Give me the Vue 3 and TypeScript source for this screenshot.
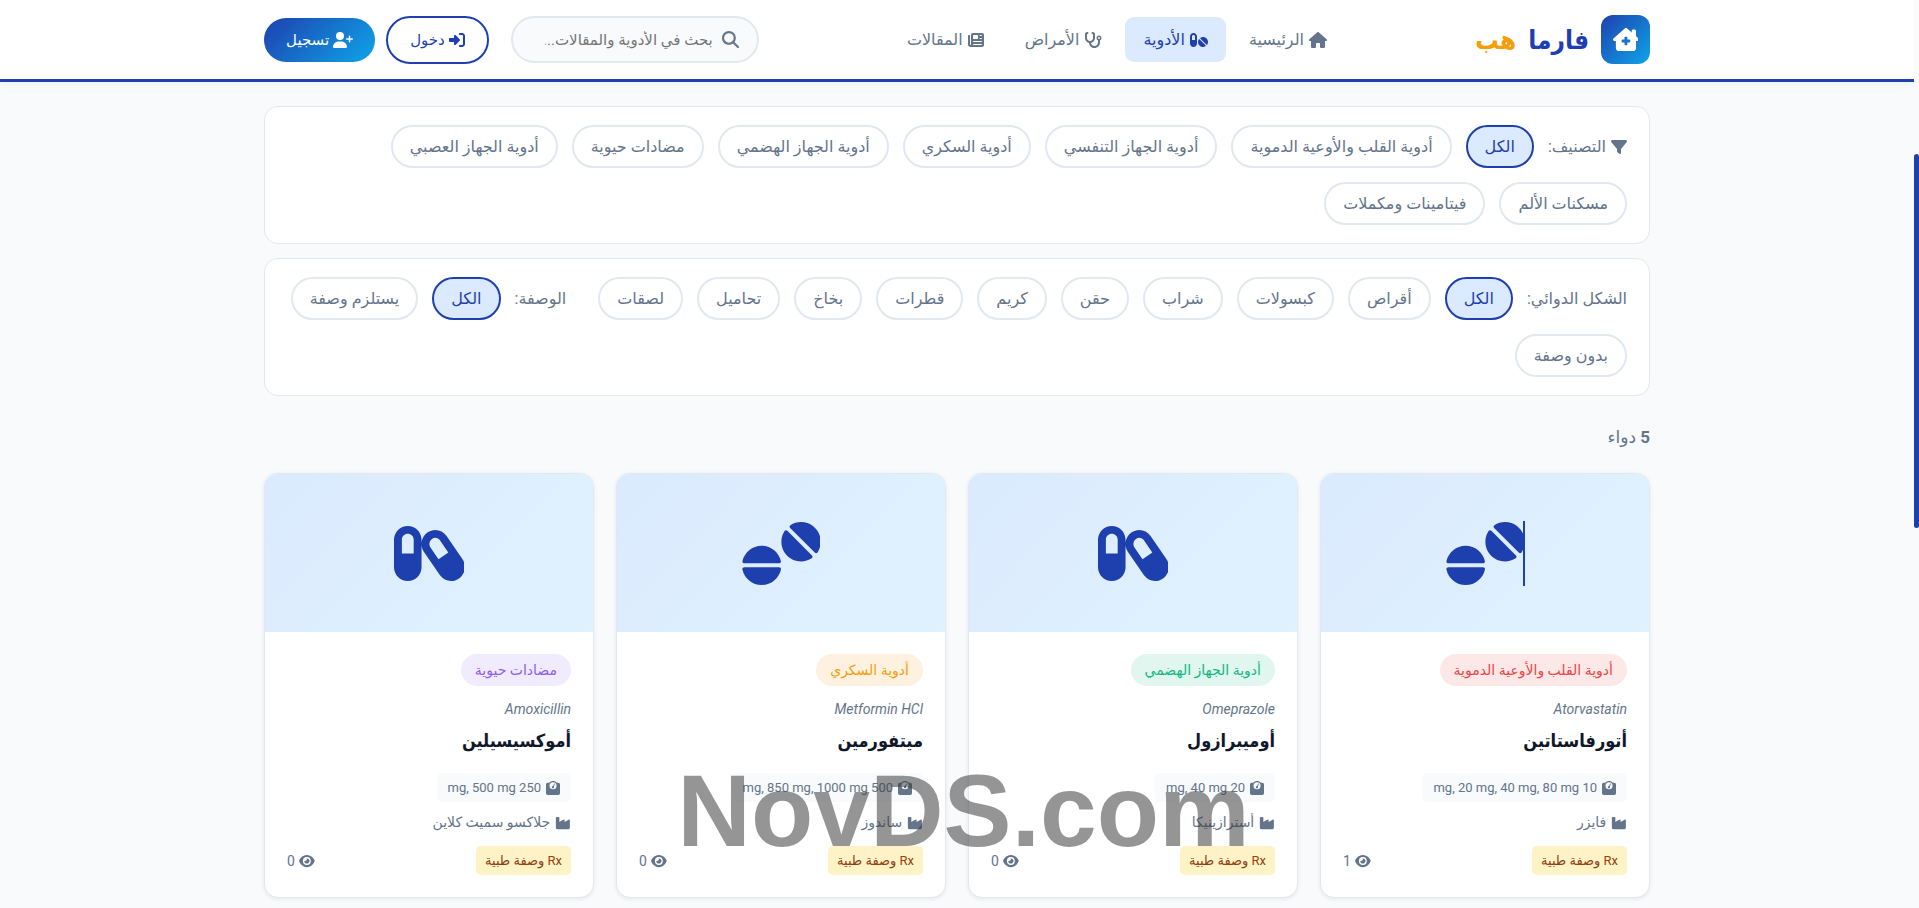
<script setup lang="ts">
import { h, ref } from 'vue'

type Glyph = { w: number; d: string }

const glyphs: Record<string, Glyph> = {
  houseMedical: { w: 576, d: 'M543.8 287.6c17 0 32-14 32-32.1c1-9-3-17-11-24L512 185l0-121c0-17.7-14.3-32-32-32l-32 0c-17.7 0-32 14.3-32 32l0 36.7L309.5 7c-6-5-14-7-21-7s-15 1-22 8L10 231.5c-7 7-10 15-10 24c0 18 14 32.1 32 32.1l32 0 0 160.4c0 35.3 28.7 64 64 64l320.4 0c35.5 0 64.2-28.8 64-64.3l-.7-160.2 32 0zM256 208c0-8.8 7.2-16 16-16l32 0c8.8 0 16 7.2 16 16l0 48 48 0c8.8 0 16 7.2 16 16l0 32c0 8.8-7.2 16-16 16l-48 0 0 48c0 8.8-7.2 16-16 16l-32 0c-8.8 0-16-7.2-16-16l0-48-48 0c-8.8 0-16-7.2-16-16l0-32c0-8.8 7.2-16 16-16l48 0 0-48z' },
  house: { w: 576, d: 'M575.8 255.5c0 18-15 32.1-32 32.1l-32 0 .7 160.2c0 2.7-.2 5.4-.5 8.1l0 16.2c0 22.1-17.9 40-40 40l-16 0c-1.1 0-2.2 0-3.3-.1c-1.4 .1-2.8 .1-4.2 .1L416 512l-24 0c-22.1 0-40-17.9-40-40l0-24 0-64c0-17.7-14.3-32-32-32l-64 0c-17.7 0-32 14.3-32 32l0 64 0 24c0 22.1-17.9 40-40 40l-24 0-31.9 0c-1.5 0-3-.1-4.5-.2c-1.2 .1-2.4 .2-3.6 .2l-16 0c-22.1 0-40-17.9-40-40l0-112c0-.9 0-1.9 .1-2.8l0-69.7-32 0c-18 0-32-14-32-32.1c0-9 3-17 10-24L266.4 8c7-7 15-8 22-8s15 2 21 7L564.8 231.5c8 7 12 15 11 24z' },
  pills: { w: 576, d: 'M112 96c-26.5 0-48 21.5-48 48l0 112 96 0 0-112c0-26.5-21.5-48-48-48zM0 144C0 82.1 50.1 32 112 32s112 50.1 112 112l0 224c0 61.9-50.1 112-112 112S0 429.9 0 368L0 144zM554.9 399.4c-7.1 12.3-23.7 13.1-33.8 3.1L333.5 214.9c-10-10-9.3-26.7 3.1-33.8C360 167.7 387.1 160 416 160c88.4 0 160 71.6 160 160c0 28.9-7.7 56-21.1 79.4zm-59.5 59.5C472 472.3 444.9 480 416 480c-88.4 0-160-71.6-160-160c0-28.9 7.7-56 21.1-79.4c7.1-12.3 23.7-13.1 33.8-3.1L498.5 425.1c10 10 9.3 26.7-3.1 33.8z' },
  stethoscope: { w: 576, d: 'M142.4 21.9c5.6 16.8-3.5 34.9-20.2 40.5L96 71.1 96 192c0 53 43 96 96 96s96-43 96-96l0-120.9-26.1-8.7c-16.8-5.6-25.8-23.7-20.2-40.5s23.7-25.8 40.5-20.2l26.1 8.7C334.4 19.1 352 43.5 352 71.1L352 192c0 77.2-54.6 141.6-127.3 156.7C231 404.6 278.4 448 336 448c61.9 0 112-50.1 112-112l0-70.7c-28.3-12.3-48-40.5-48-73.3c0-44.2 35.8-80 80-80s80 35.8 80 80c0 32.8-19.7 61-48 73.3l0 70.7c0 97.2-78.8 176-176 176c-92.9 0-168.9-71.9-175.5-163.1C87.2 334.2 32 269.6 32 192L32 71.1c0-27.5 17.6-52 43.8-60.7l26.1-8.7c16.8-5.6 34.9 3.5 40.5 20.2zM480 224a32 32 0 1 0 0-64 32 32 0 1 0 0 64z' },
  newspaper: { w: 512, d: 'M96 96c0-35.3 28.7-64 64-64l288 0c35.3 0 64 28.7 64 64l0 320c0 35.3-28.7 64-64 64L80 480c-44.2 0-80-35.8-80-80L0 128c0-17.7 14.3-32 32-32s32 14.3 32 32l0 272c0 8.8 7.2 16 16 16s16-7.2 16-16L96 96zm64 24l0 80c0 13.3 10.7 24 24 24l112 0c13.3 0 24-10.7 24-24l0-80c0-13.3-10.7-24-24-24L184 96c-13.3 0-24 10.7-24 24zm208-8c0 8.8 7.2 16 16 16l48 0c8.8 0 16-7.2 16-16s-7.2-16-16-16l-48 0c-8.8 0-16 7.2-16 16zm0 96c0 8.8 7.2 16 16 16l48 0c8.8 0 16-7.2 16-16s-7.2-16-16-16l-48 0c-8.8 0-16 7.2-16 16zM160 304c0 8.8 7.2 16 16 16l256 0c8.8 0 16-7.2 16-16s-7.2-16-16-16l-256 0c-8.8 0-16 7.2-16 16zm0 96c0 8.8 7.2 16 16 16l256 0c8.8 0 16-7.2 16-16s-7.2-16-16-16l-256 0c-8.8 0-16 7.2-16 16z' },
  search: { w: 512, d: 'M416 208c0 45.9-14.9 88.3-40 122.7L502.6 457.4c12.5 12.5 12.5 32.8 0 45.3s-32.8 12.5-45.3 0L330.7 376c-34.4 25.2-76.8 40-122.7 40C93.1 416 0 322.9 0 208S93.1 0 208 0S416 93.1 416 208zM208 352a144 144 0 1 0 0-288 144 144 0 1 0 0 288z' },
  login: { w: 512, d: 'M217.9 105.9L340.7 228.7c7.2 7.2 11.3 17.1 11.3 27.3s-4.1 20.1-11.3 27.3L217.9 406.1c-6.4 6.4-15 9.9-24 9.9c-18.7 0-33.9-15.2-33.9-33.9l0-62.1L32 320c-17.7 0-32-14.3-32-32l0-64c0-17.7 14.3-32 32-32l128 0 0-62.1c0-18.7 15.2-33.9 33.9-33.9c9 0 17.6 3.6 24 9.9zM352 416l64 0c17.7 0 32-14.3 32-32l0-256c0-17.7-14.3-32-32-32l-64 0c-17.7 0-32-14.3-32-32s14.3-32 32-32l64 0c53 0 96 43 96 96l0 256c0 53-43 96-96 96l-64 0c-17.7 0-32-14.3-32-32s14.3-32 32-32z' },
  userPlus: { w: 640, d: 'M96 128a128 128 0 1 1 256 0A128 128 0 1 1 96 128zM0 482.3C0 383.8 79.8 304 178.3 304l91.4 0C368.2 304 448 383.8 448 482.3c0 16.4-13.3 29.7-29.7 29.7L29.7 512C13.3 512 0 498.7 0 482.3zM504 312l0-64-64 0c-13.3 0-24-10.7-24-24s10.7-24 24-24l64 0 0-64c0-13.3 10.7-24 24-24s24 10.7 24 24l0 64 64 0c13.3 0 24 10.7 24 24s-10.7 24-24 24l-64 0 0 64c0 13.3-10.7 24-24 24s-24-10.7-24-24z' },
  filter: { w: 512, d: 'M3.9 54.9C10.5 40.9 24.5 32 40 32l432 0c15.5 0 29.5 8.9 36.1 22.9s4.6 30.5-5.2 42.5L320 320.9 320 448c0 12.1-6.8 23.2-17.7 28.6s-23.8 4.3-33.5-3l-64-48c-8.1-6-12.8-15.5-12.8-25.6l0-79.1L9 97.3C-.7 85.4-2.8 68.8 3.9 54.9z' },
  tablets: { w: 640, d: 'M614.3 247c-5.2 7.9-16.2 8.5-22.9 1.8L391.2 48.6c-6.7-6.7-6.2-17.8 1.8-22.9C418.1 9.4 448 0 480 0c88.4 0 160 71.6 160 160c0 32-9.4 61.9-25.7 87zM567 294.3c-25.1 16.3-55 25.7-87 25.7c-88.4 0-160-71.6-160-160c0-32 9.4-61.9 25.7-87c5.2-7.9 16.2-8.5 22.9-1.8L568.8 271.4c6.7 6.7 6.2 17.8-1.8 22.9zM301.5 368c9.5 0 16.9 8.2 15 17.5C301.1 457.8 236.9 512 160 512S18.9 457.8 3.5 385.5c-2-9.3 5.5-17.5 15-17.5l283.1 0zm0-32L18.5 336c-9.5 0-16.9-8.2-15-17.5C18.9 246.2 83.1 192 160 192s141.1 54.2 156.5 126.5c2 9.3-5.5 17.5-15 17.5z' },
  capsules: { w: 576, d: 'M64 144c0-26.5 21.5-48 48-48s48 21.5 48 48l0 112-96 0 0-112zM0 144L0 368c0 61.9 50.1 112 112 112s112-50.1 112-112l0-178.4c1.8 19.1 8.2 38 19.8 54.8L372.3 431.7c35.5 51.7 105.3 64.3 156 28.1s63-107.5 27.5-159.2L427.3 113.3C391.8 61.5 321.9 49 271.3 85.2c-28 20-44.3 50.8-47.3 83l0-24.2c0-61.9-50.1-112-112-112S0 82.1 0 144zm296.6 64.2c-16-23.3-10-55.3 11.9-71c21.2-15.1 50.5-10.3 66 12.2l67 97.6L361.6 303l-65-94.8z' },
  scale: { w: 512, d: 'M128 176a128 128 0 1 1 256 0 128 128 0 1 1 -256 0zM391.8 64C359.5 24.9 310.7 0 256 0S152.5 24.9 120.2 64L64 64C28.7 64 0 92.7 0 128L0 448c0 35.3 28.7 64 64 64l384 0c35.3 0 64-28.7 64-64l0-320c0-35.3-28.7-64-64-64l-56.2 0zM296 224c0-10.6-4.1-20.2-10.9-27.4l33.6-78.3c3.5-8.1-.3-17.5-8.4-21s-17.5 .3-21 8.4L255.7 184c-22 .1-39.7 18-39.7 40c0 22.1 17.9 40 40 40s40-17.9 40-40z' },
  industry: { w: 576, d: 'M64 32C46.3 32 32 46.3 32 64l0 240 0 48 0 80c0 26.5 21.5 48 48 48l416 0c26.5 0 48-21.5 48-48l0-128 0-151.8c0-18.2-19.4-29.7-35.4-21.1L352 215.4l0-63.2c0-18.2-19.4-29.7-35.4-21.1L160 215.4 160 64c0-17.7-14.3-32-32-32L64 32z' },
  eye: { w: 576, d: 'M288 32c-80.8 0-145.5 36.8-192.6 80.6C48.6 156 17.3 208 2.5 243.7c-3.3 7.9-3.3 16.7 0 24.6C17.3 304 48.6 356 95.4 399.4C142.5 443.2 207.2 480 288 480s145.5-36.8 192.6-80.6c46.8-43.5 78.1-95.4 93-131.1c3.3-7.9 3.3-16.7 0-24.6c-14.9-35.7-46.2-87.7-93-131.1C433.5 68.8 368.8 32 288 32zM144 256a144 144 0 1 1 288 0 144 144 0 1 1 -288 0zm144-64c0 35.3-28.7 64-64 64c-7.1 0-13.9-1.2-20.3-3.3c-5.5-1.8-11.9 1.6-11.7 7.4c.3 6.9 1.3 13.8 3.2 20.7c13.7 51.2 66.4 81.6 117.6 67.9s81.6-66.4 67.9-117.6c-11.1-41.5-47.8-69.4-88.6-71.1c-5.8-.2-9.2 6.1-7.4 11.7c2.1 6.4 3.3 13.2 3.3 20.3z' },
}

const Icon = (props: { name: string }) =>
  h('svg', { viewBox: `0 0 ${glyphs[props.name].w} 512`, fill: 'currentColor', 'aria-hidden': 'true' }, [
    h('path', { d: glyphs[props.name].d }),
  ])
Icon.props = ['name']

const navItems = [
  { label: 'الرئيسية', icon: 'house', active: false },
  { label: 'الأدوية', icon: 'pills', active: true },
  { label: 'الأمراض', icon: 'stethoscope', active: false },
  { label: 'المقالات', icon: 'newspaper', active: false },
]

const categories = [
  'الكل', 'أدوية القلب والأوعية الدموية', 'أدوية الجهاز التنفسي', 'أدوية السكري', 'أدوية الجهاز الهضمي',
  'مضادات حيوية', 'أدوية الجهاز العصبي', 'مسكنات الألم', 'فيتامينات ومكملات',
]
const forms = ['الكل', 'أقراص', 'كبسولات', 'شراب', 'حقن', 'كريم', 'قطرات', 'بخاخ', 'تحاميل', 'لصقات']
const prescriptions = ['الكل', 'يستلزم وصفة', 'بدون وصفة']

const category = ref('الكل')
const form = ref('الكل')
const prescription = ref('الكل')
const query = ref('')

const drugs = [
  { name: 'أتورفاستاتين', generic: 'Atorvastatin', tag: 'أدوية القلب والأوعية الدموية', tone: 'red', icon: 'tablets', caret: true, dose: '10 mg, 20 mg, 40 mg, 80 mg', maker: 'فايزر', views: 1 },
  { name: 'أوميبرازول', generic: 'Omeprazole', tag: 'أدوية الجهاز الهضمي', tone: 'green', icon: 'capsules', caret: false, dose: '20 mg, 40 mg', maker: 'أسترازينيكا', views: 0 },
  { name: 'ميتفورمين', generic: 'Metformin HCl', tag: 'أدوية السكري', tone: 'orange', icon: 'tablets', caret: false, dose: '500 mg, 850 mg, 1000 mg', maker: 'ساندوز', views: 0 },
  { name: 'أموكسيسيلين', generic: 'Amoxicillin', tag: 'مضادات حيوية', tone: 'purple', icon: 'capsules', caret: false, dose: '250 mg, 500 mg', maker: 'جلاكسو سميث كلاين', views: 0 },
]
</script>

<template>
  <div class="page" dir="rtl" lang="ar">
    <header class="header">
      <div class="container bar">
        <a class="logo" href="#">
          <span class="logo-mark"><Icon name="houseMedical" /></span>
          <span class="logo-main">فارما</span>
          <span class="logo-accent">هب</span>
        </a>
        <nav class="nav">
          <a v-for="item in navItems" :key="item.label" href="#" class="nav-link" :class="{ active: item.active }">
            <Icon :name="item.icon" class="icon" />{{ item.label }}
          </a>
        </nav>
        <div class="tools">
          <label class="search">
            <Icon name="search" class="icon" />
            <input v-model="query" type="search" aria-label="بحث" placeholder="بحث في الأدوية والمقالات..." />
          </label>
          <div class="account">
            <a class="btn outline" href="#"><Icon name="login" class="icon" />دخول</a>
            <a class="btn solid" href="#"><Icon name="userPlus" class="icon" />تسجيل</a>
          </div>
        </div>
      </div>
    </header>

    <main class="container main">
      <section class="filters">
        <span class="filter-label"><Icon name="filter" class="icon" />التصنيف:</span>
        <button v-for="c in categories" :key="c" type="button" class="pill" :class="{ active: c === category }" @click="category = c">{{ c }}</button>
      </section>

      <section class="filters">
        <span class="filter-label">الشكل الدوائي:</span>
        <button v-for="f in forms" :key="f" type="button" class="pill" :class="{ active: f === form }" @click="form = f">{{ f }}</button>
        <span class="filter-label spaced">الوصفة:</span>
        <button v-for="p in prescriptions" :key="p" type="button" class="pill" :class="{ active: p === prescription }" @click="prescription = p">{{ p }}</button>
      </section>

      <p class="count"><strong>5</strong> دواء</p>

      <section class="grid">
        <article v-for="d in drugs" :key="d.generic" class="card">
          <div class="cover">
            <span class="cover-icon" :class="{ caret: d.caret }"><Icon :name="d.icon" /></span>
          </div>
          <div class="body">
            <span class="tag" :class="d.tone">{{ d.tag }}</span>
            <span class="generic">{{ d.generic }}</span>
            <h3 class="name">{{ d.name }}</h3>
            <span class="dose"><Icon name="scale" class="icon" /><span>{{ d.dose }}</span></span>
            <span class="maker"><Icon name="industry" class="icon" />{{ d.maker }}</span>
            <div class="foot">
              <span class="rx">Rx وصفة طبية</span>
              <span class="views"><Icon name="eye" class="icon" />{{ d.views }}</span>
            </div>
          </div>
        </article>
      </section>
    </main>

    <div class="watermark" dir="ltr">NovDS.com</div>
    <div class="scroll-track"><div class="scroll-thumb"></div></div>
  </div>
</template>

<style>
body {
  margin: 0;
  background: #f8fafc;
}
</style>

<style scoped>
.page {
  min-height: 100vh;
  box-sizing: border-box;
  padding-right: 5px;
  background: #f8fafc;
  color: #64748b;
  font-family: Roboto, "DejaVu Sans", sans-serif;
  font-size: 16px;
}
.page *,
.page *::before {
  box-sizing: border-box;
}
a {
  color: inherit;
  text-decoration: none;
}
.icon {
  height: 16px;
  flex: none;
}
.container {
  width: 100%;
  max-width: 1386px;
  margin: 0 auto;
}
.header {
  background: #fff;
  border-bottom: 3px solid #1e40af;
  box-shadow: 0 2px 8px rgba(15, 23, 42, 0.05);
}
.bar {
  height: 79px;
  display: flex;
  align-items: center;
  justify-content: space-between;
}
.logo {
  display: flex;
  align-items: center;
  gap: 12px;
  font-family: Roboto, "DejaVu Sans Condensed", sans-serif;
  font-size: 26px;
  font-weight: 700;
  line-height: 40px;
  color: #1e40af;
}
.logo-mark {
  width: 49px;
  height: 49px;
  border-radius: 12px;
  display: grid;
  place-items: center;
  color: #fff;
  background: linear-gradient(135deg, #1e40af, #0ea5e9);
}
.logo-mark svg {
  height: 23px;
}
.logo-accent {
  color: #f59e0b;
}
.nav {
  display: flex;
  gap: 5px;
}
.nav-link {
  display: flex;
  align-items: center;
  gap: 5px;
  height: 45px;
  padding: 0 18px;
  border-radius: 9px;
  font-weight: 500;
}
.nav-link.active {
  background: #dbeafe;
  color: #1e40af;
}
.tools {
  display: flex;
  align-items: center;
  gap: 22px;
}
.search {
  display: flex;
  align-items: center;
  gap: 9px;
  width: 248px;
  height: 47px;
  padding: 0 18px;
  border: 2px solid #e2e8f0;
  border-radius: 24px;
  background: #f8fafc;
}
.search .icon {
  height: 17px;
}
.search input {
  flex: 1;
  min-width: 0;
  padding: 0;
  border: 0;
  outline: 0;
  background: none;
  font: inherit;
  font-size: 15px;
  color: #0f172a;
}
.search input::placeholder {
  color: #757575;
}
.account {
  display: flex;
  align-items: center;
  gap: 11px;
}
.btn {
  display: flex;
  align-items: center;
  gap: 4px;
  height: 44px;
  padding: 0 22px;
  border-radius: 24px;
  font-size: 15px;
  font-weight: 500;
}
.btn.outline {
  height: 48px;
  border: 2px solid #1e40af;
  color: #1e40af;
}
.btn.solid {
  color: #fff;
  background: linear-gradient(135deg, #1e40af, #0ea5e9);
}
.main {
  padding: 24px 0 11px;
}
.filters {
  display: flex;
  flex-wrap: wrap;
  align-items: center;
  gap: 14px;
  margin-bottom: 14px;
  padding: 18px 22px;
  border: 1px solid #e2e8f0;
  border-radius: 14px;
  background: #fff;
}
.filter-label {
  display: flex;
  align-items: center;
  gap: 5px;
}
.filter-label.spaced {
  margin-right: 18px;
}
.pill {
  height: 43px;
  padding: 0 17px;
  border: 2px solid #e2e8f0;
  border-radius: 22px;
  background: #fff;
  color: #64748b;
  font: inherit;
}
.pill.active {
  border-color: #1e40af;
  background: #dbeafe;
  color: #1e40af;
}
.count {
  margin: 28px 0 22px;
  font-size: 17px;
  line-height: 27px;
}
.grid {
  display: grid;
  grid-template-columns: repeat(4, 1fr);
  gap: 22px;
}
.card {
  overflow: hidden;
  border: 1px solid #e2e8f0;
  border-radius: 14px;
  background: #fff;
  box-shadow: 0 1px 4px rgba(15, 23, 42, 0.08);
}
.cover {
  height: 158px;
  display: grid;
  place-items: center;
  color: #1e40af;
  background: linear-gradient(135deg, #dbeafe, #e0f2fe);
}
.cover-icon {
  position: relative;
  display: flex;
}
.cover-icon svg {
  height: 63px;
}
.caret::before {
  content: "";
  position: absolute;
  top: -1px;
  right: -1px;
  width: 2px;
  height: 65px;
  background: #1e40af;
}
.body {
  display: flex;
  flex-direction: column;
  align-items: flex-start;
  padding: 22px;
}
.tag {
  height: 32px;
  padding: 0 14px;
  border-radius: 16px;
  font-size: 14px;
  line-height: 32px;
}
.red {
  color: #ef4444;
  background: #fde8e8;
}
.green {
  color: #10b981;
  background: #e1f6ef;
}
.orange {
  color: #f59e0b;
  background: #fef1e0;
}
.purple {
  color: #8b5cf6;
  background: #f1ebfe;
}
.generic {
  margin-top: 11px;
  font-size: 14px;
  font-style: italic;
  line-height: 24px;
}
.name {
  margin: 4px 0 0;
  color: #0f172a;
  font-family: Roboto, "DejaVu Sans Condensed", sans-serif;
  font-size: 18px;
  font-weight: 700;
  line-height: 32px;
}
.dose {
  display: flex;
  align-items: center;
  gap: 5px;
  height: 29px;
  margin-top: 16px;
  padding: 0 11px;
  border-radius: 5px;
  background: #f8fafc;
  font-size: 13px;
}
.dose .icon,
.maker .icon,
.views .icon {
  height: 14px;
}
.maker {
  display: flex;
  align-items: center;
  gap: 5px;
  margin-top: 8px;
  font-size: 14px;
  line-height: 25px;
}
.foot {
  align-self: stretch;
  display: flex;
  align-items: center;
  justify-content: space-between;
  margin-top: 11px;
}
.rx {
  height: 29px;
  padding: 0 9px;
  border-radius: 5px;
  background: #fef3c7;
  color: #92400e;
  font-size: 13px;
  line-height: 29px;
}
.views {
  display: flex;
  align-items: center;
  gap: 4px;
  font-size: 14px;
}
.watermark {
  position: fixed;
  right: 0;
  bottom: 37px;
  left: 8px;
  color: rgba(60, 60, 60, 0.54);
  font-family: "Liberation Sans", Arial, sans-serif;
  font-size: 102px;
  font-weight: 700;
  line-height: 120px;
  text-align: center;
  pointer-events: none;
}
.scroll-track {
  position: fixed;
  top: 0;
  right: 0;
  bottom: 0;
  width: 5px;
  background: #f8fafc;
}
.scroll-thumb {
  height: 374px;
  margin-top: 154px;
  border-radius: 3px;
  background: #1e40af;
}
</style>
